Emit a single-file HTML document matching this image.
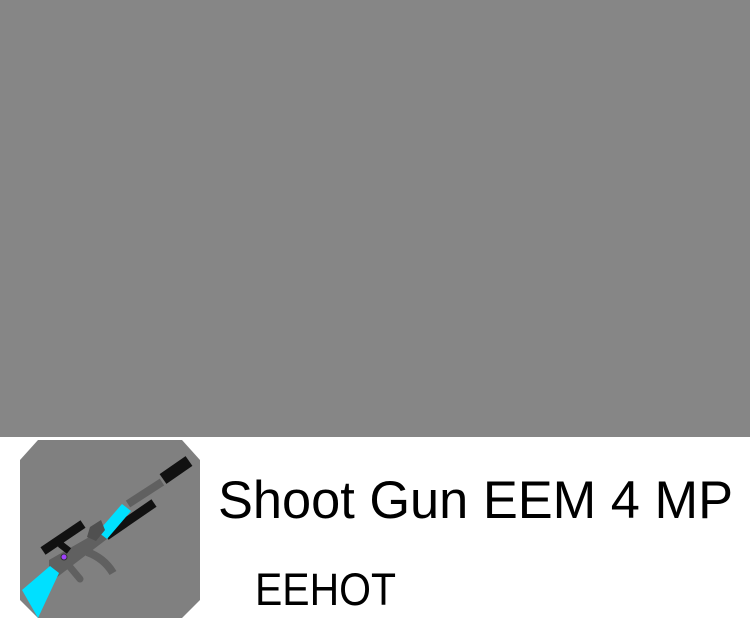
<!DOCTYPE html>
<html><head><style>
html,body{margin:0;padding:0;width:750px;height:625px;overflow:hidden;background:#fff}
.top{position:absolute;left:0;top:0;width:750px;height:437px;background:#868686}
svg{position:absolute;left:0;top:0}
</style></head><body>
<div class="top"></div>
<svg width="750" height="625" viewBox="0 0 750 625">
<g transform="translate(20,440)">
<polygon points="18,0 162,0 180,20 180,160 162,178 18,178 0,160 0,20" fill="#808080"/>
<line x1="143" y1="39" x2="169" y2="21" stroke="#111" stroke-width="12"/>
<line x1="142" y1="42" x2="108" y2="64" stroke="#606060" stroke-width="8"/>
<line x1="134" y1="63" x2="86" y2="96" stroke="#111" stroke-width="9"/>
<polygon points="102,64 111,71 87,99 76,94" fill="#00e0ff"/>
<polygon points="29,120 78,92 87,99 36,138 29,131" fill="#606060"/>
<polygon points="70,87 81,80 85,90 76,101 67,97" fill="#505050"/>
<line x1="23" y1="111" x2="63" y2="84" stroke="#111" stroke-width="9"/>
<line x1="40" y1="104" x2="49" y2="111" stroke="#111" stroke-width="7"/>
<path d="M67,112 Q84,118 93,133" stroke="#606060" stroke-width="8" fill="none"/>
<line x1="50" y1="127" x2="60" y2="139" stroke="#606060" stroke-width="7" stroke-linecap="round"/>
<polygon points="2,150 18,178 39,133 30,126" fill="#00e0ff"/>
<circle cx="44" cy="117" r="3" fill="#a040ff" stroke="#333" stroke-width="1"/>
</g>
<text x="218" y="518" font-family="Liberation Sans, sans-serif" font-size="53" textLength="515" lengthAdjust="spacingAndGlyphs">Shoot Gun EEM 4 MP</text>
<text x="255" y="605" font-family="Liberation Sans, sans-serif" font-size="45" textLength="141" lengthAdjust="spacingAndGlyphs">EEHOT</text>
</svg>
</body></html>
